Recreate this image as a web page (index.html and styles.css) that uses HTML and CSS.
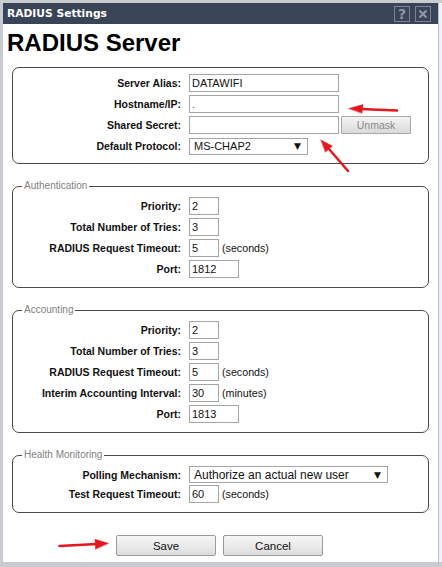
FILE: index.html
```html
<!DOCTYPE html>
<html lang="en">
<head>
  <meta charset="UTF-8">
  <title>RADIUS Settings</title>
  <link rel="stylesheet" href="styles.css">
</head>
<body>
  <div class="dialog">
    <div class="titlebar">
      <span class="title">RADIUS Settings</span>
      <span class="tbtn">?</span>
      <span class="tbtn">
        <svg width="10" height="10" viewBox="0 0 10 10"><path d="M1.5 1.5 L8.5 8.5 M8.5 1.5 L1.5 8.5" stroke="#8f96a1" stroke-width="2.2"/></svg>
      </span>
    </div>

    <h1>RADIUS Server</h1>

    <fieldset class="group first">
      <div class="form">
        <label>Server Alias:</label>
        <div class="field"><input class="txt w150" value="DATAWIFI"></div>
        <label>Hostname/IP:</label>
        <div class="field"><input class="txt w150 dot" value="."></div>
        <label>Shared Secret:</label>
        <div class="field"><input class="txt w150" type="password"><button class="unmask" disabled>Unmask</button></div>
        <label>Default Protocol:</label>
        <div class="field"><div class="select proto"><span>MS-CHAP2</span><span class="arrow">&#9660;</span></div></div>
      </div>
    </fieldset>

    <fieldset class="group">
      <legend>Authentication</legend>
      <div class="form">
        <label>Priority:</label>
        <div class="field"><input class="txt w30" value="2"></div>
        <label>Total Number of Tries:</label>
        <div class="field"><input class="txt w30" value="3"></div>
        <label>RADIUS Request Timeout:</label>
        <div class="field"><input class="txt w30" value="5"><span class="unit">(seconds)</span></div>
        <label>Port:</label>
        <div class="field"><input class="txt w50" value="1812"></div>
      </div>
    </fieldset>

    <fieldset class="group">
      <legend>Accounting</legend>
      <div class="form">
        <label>Priority:</label>
        <div class="field"><input class="txt w30" value="2"></div>
        <label>Total Number of Tries:</label>
        <div class="field"><input class="txt w30" value="3"></div>
        <label>RADIUS Request Timeout:</label>
        <div class="field"><input class="txt w30" value="5"><span class="unit">(seconds)</span></div>
        <label>Interim Accounting Interval:</label>
        <div class="field"><input class="txt w30" value="30"><span class="unit">(minutes)</span></div>
        <label>Port:</label>
        <div class="field"><input class="txt w50" value="1813"></div>
      </div>
    </fieldset>

    <fieldset class="group">
      <legend>Health Monitoring</legend>
      <div class="form health">
        <label>Polling Mechanism:</label>
        <div class="field"><div class="select polling"><span>Authorize an actual new user</span><span class="arrow">&#9660;</span></div></div>
        <label>Test Request Timeout:</label>
        <div class="field"><input class="txt w30" value="60"><span class="unit">(seconds)</span></div>
      </div>
    </fieldset>

    <div class="actions">
      <button class="btn">Save</button>
      <button class="btn">Cancel</button>
    </div>
  </div>

  <!-- annotation arrows drawn over the screenshot -->
  <svg class="marks" width="442" height="567" viewBox="0 0 442 567">
    <g fill="#e5161d" stroke="#e5161d" stroke-linecap="round">
      <line x1="397" y1="110.5" x2="360" y2="109" stroke-width="2.5"/>
      <polygon points="349,108.5 363,104.5 362,113" stroke-width="0.5"/>
      <line x1="348" y1="171" x2="329" y2="149" stroke-width="2.5"/>
      <polygon points="321,140 332.3,146.1 325.5,152.1" stroke-width="0.5"/>
      <line x1="59.5" y1="546" x2="97" y2="544" stroke-width="2.5"/>
      <polygon points="108.3,543.3 95,539.3 95.5,549" stroke-width="0.5"/>
    </g>
  </svg>
</body>
</html>
```

FILE: styles.css
```css
body {
  margin: 0;
  height: 567px;
  overflow: hidden;
  background: #c8cbd0;
  font-family: "Liberation Sans", Arial, sans-serif;
  color: #111;
}
.dialog {
  margin: 3px 0 0 2px;
  width: 435px;
  height: 559px;
  background: #fff;
  border-left: 1px solid #c3cddb;
  border-right: 1px solid #adbfd8;
  box-shadow: 4px 0 0 #f1f2f4;
}
.titlebar {
  display: flex;
  align-items: center;
  gap: 5px;
  height: 21px;
  padding: 0 7px 0 4px;
  background: #394457;
}
.title {
  flex: 1;
  font-family: "DejaVu Sans", Verdana, sans-serif;
  font-weight: bold;
  font-size: 10.7px;
  color: #fff;
}
.tbtn {
  display: flex;
  align-items: center;
  justify-content: center;
  box-sizing: border-box;
  width: 16px;
  height: 16px;
  border: 1px solid #7b8494;
  color: #8f96a1;
  font-family: "DejaVu Sans", Verdana, sans-serif;
  font-weight: bold;
  font-size: 14px;
  line-height: 1;
}
h1 {
  margin: 5px 0 10px;
  padding-left: 4px;
  font-size: 24px;
  line-height: 28px;
  font-weight: bold;
  color: #000;
}
.group {
  margin: 0 9px;
  padding: 5px 0 9px;
  min-width: 0;
  border: 1px solid #4a4a4a;
  border-radius: 7px;
}
.group + .group {
  margin-top: 16px;
}
.group.first {
  padding: 6px 0 8px;
}
legend {
  margin-left: 9px;
  padding: 0 2px;
  font-size: 10px;
  line-height: 12px;
  color: #7f7f7f;
}
.form {
  display: grid;
  grid-template-columns: 168px 1fr;
  grid-auto-rows: 18px;
  column-gap: 8px;
  row-gap: 3px;
  align-items: center;
}
.form.health {
  row-gap: 2px;
  grid-template-rows: 17px 18px;
}
.form label {
  text-align: right;
  font-weight: bold;
  font-size: 10.5px;
  color: #111;
  white-space: nowrap;
}
.field {
  display: flex;
  align-items: center;
  gap: 3px;
  height: 100%;
}
.txt {
  box-sizing: border-box;
  height: 18px;
  margin: 0;
  padding: 0 2px;
  border: 1px solid #a5a5a5;
  border-radius: 0;
  font-family: "Liberation Sans", Arial, sans-serif;
  font-size: 11px;
  color: #111;
  outline: none;
}
.w150 { width: 150px; }
.w30 { width: 30px; }
.w50 { width: 50px; }
.dot { color: #a33; }
.unit {
  font-size: 10.7px;
  color: #111;
}
.unmask {
  box-sizing: border-box;
  width: 70px;
  height: 18px;
  margin: 0 0 0 -1px;
  padding: 0;
  border: 1px solid #a8a8a8;
  border-radius: 1px;
  background: linear-gradient(#f4f4f4, #dadada);
  font-family: "Liberation Sans", Arial, sans-serif;
  font-size: 10.5px;
  color: #8a8a8a;
}
.select {
  box-sizing: border-box;
  display: flex;
  align-items: center;
  justify-content: space-between;
  height: 17px;
  padding: 0 6px 0 4px;
  border: 1px solid #a5a5a5;
  background: #fff;
  font-size: 11px;
  color: #111;
}
.select .arrow {
  font-family: "DejaVu Sans", sans-serif;
  font-size: 9px;
  color: #111;
}
.proto { width: 119px; }
.polling {
  width: 199px;
  font-size: 12px;
}
.actions {
  display: flex;
  justify-content: center;
  gap: 7px;
  margin-top: 22px;
  padding-right: 2px;
}
.btn {
  box-sizing: border-box;
  width: 100px;
  height: 21px;
  margin: 0;
  border: 1px solid #9a9a9a;
  border-radius: 2px;
  background: linear-gradient(#f7f7f7, #dddddd);
  font-family: "Liberation Sans", Arial, sans-serif;
  font-size: 11.5px;
  color: #111;
}
.marks {
  position: absolute;
  top: 0;
  left: 0;
  pointer-events: none;
}
```
